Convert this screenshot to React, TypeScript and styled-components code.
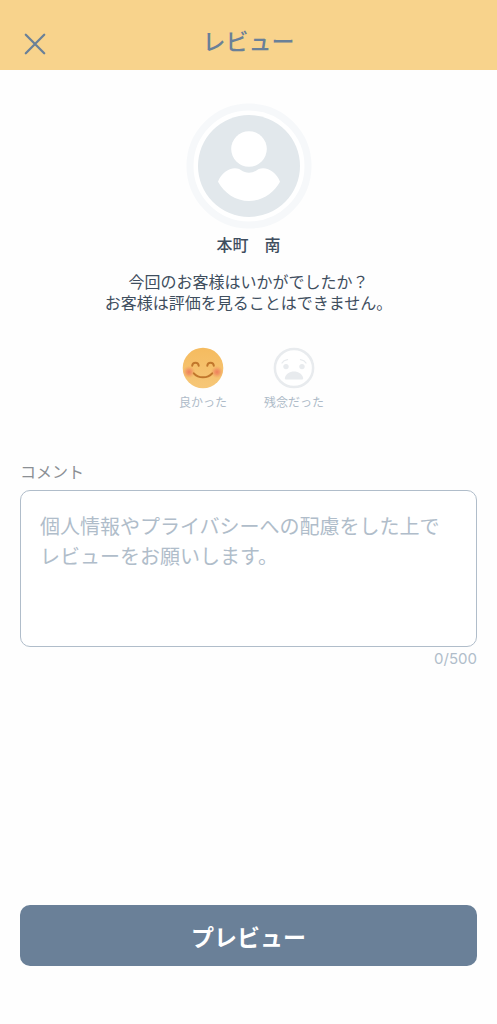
import React, { useState } from 'react';
import styled, { createGlobalStyle } from 'styled-components';

const MAX_LENGTH = 500;

const GlobalStyle = createGlobalStyle`
  *, *::before, *::after { box-sizing: border-box; }
  body {
    margin: 0;
    background: #fefefe;
    color: #3f4e5e;
    font-family: 'Noto Sans CJK JP', 'Noto Sans', sans-serif;
  }
  button, textarea { font-family: inherit; }
`;

const Page = styled.div`
  display: flex;
  flex-direction: column;
  min-height: 100vh;
`;

const Header = styled.header`
  display: grid;
  grid-template-columns: 30px 1fr 30px;
  align-items: center;
  height: 70px;
  padding: 10px 20px 0;
  background: #f8d38c;
  color: #6a8098;
`;

const CloseButton = styled.button`
  display: flex;
  align-items: center;
  justify-content: center;
  width: 30px;
  height: 30px;
  margin-top: 8px;
  padding: 0;
  border: 0;
  background: none;
  color: inherit;
  cursor: pointer;
`;

const Title = styled.h1`
  margin: 0;
  font-size: 23px;
  line-height: 32px;
  font-weight: 500;
  text-align: center;
`;

const Form = styled.form`
  display: flex;
  flex: 1;
  flex-direction: column;
  padding: 33px 20px 58px;
`;

const Customer = styled.section`
  display: flex;
  flex-direction: column;
  align-items: center;
  text-align: center;
`;

const Name = styled.h2`
  margin: 4px 0 0;
  font-size: 16px;
  line-height: 22px;
  font-weight: 500;
`;

const Question = styled.p`
  margin: 16px 0 0;
  font-size: 16px;
  line-height: 21px;
`;

const Ratings = styled.fieldset`
  display: flex;
  justify-content: center;
  gap: 20px;
  margin: 34px 0 0;
  padding: 0;
  border: 0;
`;

const Rating = styled.label`
  position: relative;
  display: flex;
  flex-direction: column;
  align-items: center;
  gap: 4px;
  width: 71px;
  color: #aebbc8;
  font-size: 12px;
  line-height: 17px;
  cursor: pointer;
`;

const RatingInput = styled.input`
  position: absolute;
  inset: 0;
  margin: 0;
  opacity: 0;
  cursor: pointer;
`;

const CommentLabel = styled.label`
  margin-top: 50px;
  color: #8b8f94;
  font-size: 16px;
  line-height: 22px;
`;

const Comment = styled.textarea`
  display: block;
  width: 100%;
  height: 157px;
  margin-top: 8px;
  padding: 20px 19px;
  border: 1px solid #b0bdca;
  border-radius: 10px;
  background: #fff;
  color: #3f4e5e;
  font-size: 20px;
  line-height: 30px;
  resize: none;

  &::placeholder {
    color: #b0bdca;
    opacity: 1;
  }
`;

const Counter = styled.output`
  align-self: flex-end;
  margin-top: 2px;
  color: #b0bdca;
  font-family: Inter, 'Noto Sans', sans-serif;
  font-size: 15px;
  line-height: 20px;
`;

const SubmitButton = styled.button`
  width: 100%;
  height: 61px;
  margin-top: auto;
  padding: 0;
  border: 0;
  border-radius: 10px;
  background: #6a8098;
  color: #fff;
  font-size: 23px;
  line-height: 32px;
  font-weight: 700;
  cursor: pointer;
`;

const CloseIcon = () => (
  <svg width="22" height="22" viewBox="-11 -11 22 22" fill="none" stroke="currentColor" strokeWidth="2.3" strokeLinecap="round" aria-hidden="true">
    <path d="M-9.200-9.200 9.200 9.200M9.200-9.200-9.200 9.200" />
  </svg>
);

const Avatar = () => (
  <svg width="126" height="126" viewBox="-63 -63 126 126" aria-hidden="true">
    <circle r="59" fill="#fff" stroke="#f6f8fa" strokeWidth="7" />
    <circle r="51" fill="#e2e8ec" />
    <circle cy="-17" r="17.8" fill="#fff" />
    <path
      d="M-31 15.700C-28 8-21 2.300-14 2.300C-11 2.300-9.800 3-8.200 4C-3 7.700 3 7.700 8.200 4C9.800 3 11 2.300 14 2.300C21 2.300 28 8 31 15.700C25 27 13 35 0 35C-13 35-25 27-31 15.700Z"
      fill="#fff"
    />
  </svg>
);

const HappyFace = () => (
  <svg width="42" height="42" viewBox="-21 -21 42 42" fill="none" aria-hidden="true">
    <defs>
      <linearGradient id="skin" x1="0" y1="0" x2="0" y2="1">
        <stop offset="0" stopColor="#f5bb5f" />
        <stop offset="1" stopColor="#f6c778" />
      </linearGradient>
      <radialGradient id="blush">
        <stop offset="0" stopColor="#ee7f5c" />
        <stop offset="0.4" stopColor="#ef8a60" stopOpacity="0.75" />
        <stop offset="1" stopColor="#f2a060" stopOpacity="0" />
      </radialGradient>
    </defs>
    <circle r="20.3" fill="url(#skin)" />
    <circle cx="-14" cy="4" r="6.3" fill="url(#blush)" />
    <circle cx="14" cy="4" r="6.3" fill="url(#blush)" />
    <g stroke="#c1772c" strokeWidth="2" strokeLinecap="round">
      <path d="M-10.800-2.200C-10.500-6.200-4.600-6.200-4.300-2.200" />
      <path d="M4.300-2.200C4.600-6.200 10.500-6.200 10.800-2.200" />
      <path d="M-9.200 5.300C-4.500 10.700 4.500 10.700 9.200 5.300" />
    </g>
  </svg>
);

const SadFace = () => (
  <svg width="42" height="42" viewBox="-21 -21 42 42" fill="#e8ebee" aria-hidden="true">
    <circle r="19.100" fill="#fff" stroke="#e8ebee" strokeWidth="2.500" />
    <circle cx="-8" cy="-1.400" r="2.700" />
    <circle cx="8" cy="-1.400" r="2.700" />
    <path
      d="M-12-5Q-10.500-7.500-6.500-8.300M12-5Q10.500-7.500 6.500-8.300"
      fill="none"
      stroke="#e8ebee"
      strokeWidth="1.300"
      strokeLinecap="round"
    />
    <path d="M-9.200 10C-8 5.800-4.500 3.600 0 3.600C4.500 3.600 8 5.800 9.200 10Q9.400 11.500 8 11.500H-8Q-9.400 11.500-9.200 10Z" />
  </svg>
);

export default function App() {
  const [rating, setRating] = useState('good');
  const [comment, setComment] = useState('');

  return (
    <Page>
      <GlobalStyle />
      <Header>
        <CloseButton type="button" aria-label="閉じる">
          <CloseIcon />
        </CloseButton>
        <Title>レビュー</Title>
      </Header>
      <Form onSubmit={(event) => event.preventDefault()}>
        <Customer>
          <Avatar />
          <Name>本町　南</Name>
          <Question>
            今回のお客様はいかがでしたか？
            <br />
            お客様は評価を見ることはできません。
          </Question>
        </Customer>
        <Ratings aria-label="評価">
          <Rating>
            <RatingInput type="radio" name="rating" value="good" checked={rating === 'good'} onChange={() => setRating('good')} />
            <HappyFace />
            良かった
          </Rating>
          <Rating>
            <RatingInput type="radio" name="rating" value="bad" checked={rating === 'bad'} onChange={() => setRating('bad')} />
            <SadFace />
            残念だった
          </Rating>
        </Ratings>
        <CommentLabel htmlFor="comment">コメント</CommentLabel>
        <Comment
          id="comment"
          maxLength={MAX_LENGTH}
          placeholder="個人情報やプライバシーへの配慮をした上でレビューをお願いします。"
          value={comment}
          onChange={(event) => setComment(event.target.value)}
        />
        <Counter htmlFor="comment">
          {comment.length}/{MAX_LENGTH}
        </Counter>
        <SubmitButton type="submit">プレビュー</SubmitButton>
      </Form>
    </Page>
  );
}
